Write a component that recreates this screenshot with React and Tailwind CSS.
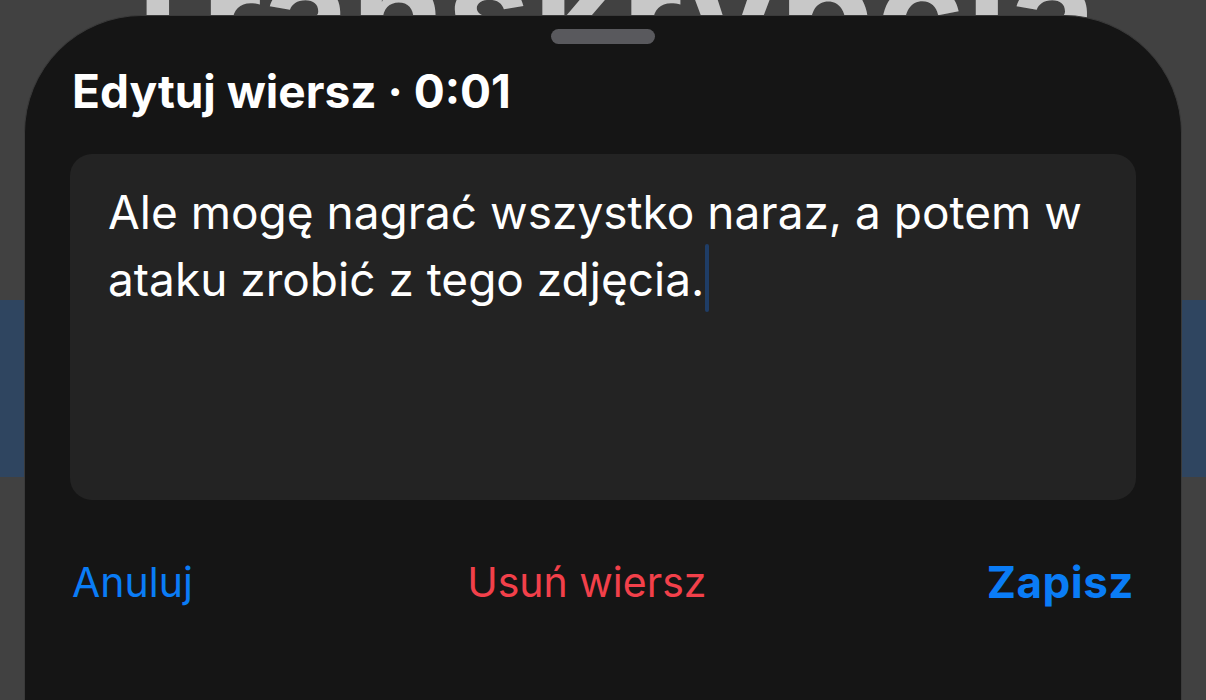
export default function App() {
  return (
    <div
      className="relative w-[1206px] h-[700px] overflow-hidden bg-[#414141]"
      style={{ fontFamily: "Inter, 'Noto Sans', sans-serif" }}
    >
      {/* page behind the sheet */}
      <div className="absolute left-0 right-0 top-0 h-[20px] overflow-hidden">
        <div className="mt-[-62px] text-center text-[150px] font-bold leading-none text-[#c8c8c8] tracking-[2px]">
          Transkrypcja
        </div>
      </div>
      <div className="absolute left-0 right-0 top-[300px] h-[177px] bg-[#2f4560]" />

      {/* sheet */}
      <div className="absolute left-[24px] right-[24px] top-[15px] bottom-[-40px] rounded-t-[118px] bg-[#151515] border-t border-x border-[#3a3a3a]">
        <div className="flex justify-center pt-[13px]">
          <div className="w-[104px] h-[15px] rounded-full bg-[#59595d]" />
        </div>

        <div className="px-[45px] pt-[17px]">
          <h1 className="pl-[2px] text-[46px] font-bold text-white leading-[60px]">
            Edytuj wiersz · 0:01
          </h1>

          <div className="mt-[33px] h-[346px] rounded-[22px] bg-[#232323] pl-[38px] pr-[30px] pt-[27px]">
            <p className="text-[46px] leading-[63px] text-white">
              Ale mogę nagrać wszystko naraz, a potem w ataku zrobić z tego zdjęcia.
              <span className="inline-block align-[-16px] ml-[1px] w-[4px] h-[68px] rounded-full bg-[#1f3d66]" />
            </p>
          </div>

          <div className="mt-[52px] flex items-center justify-between text-[41px] leading-[60px] pl-[2px] pr-[2px]">
            <button className="text-[#0a7cf6]">Anuluj</button>
            <button className="text-[#f2404a] mr-[6px]">Usuń wiersz</button>
            <button className="text-[#0a7cf6] font-bold text-[44px] tracking-[0.5px]">Zapisz</button>
          </div>
        </div>
      </div>
    </div>
  );
}
